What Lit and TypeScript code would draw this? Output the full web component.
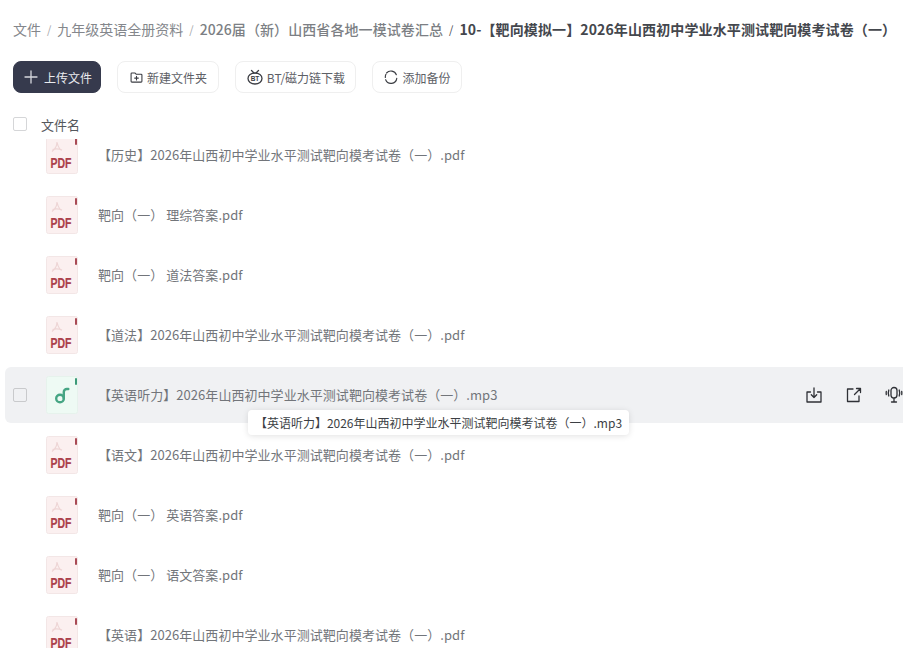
import { LitElement, html, css, svg } from "lit";
import { customElement } from "lit/decorators.js";

const FILES = [
  "【历史】2026年山西初中学业水平测试靶向模考试卷（一）.pdf",
  "靶向（一） 理综答案.pdf",
  "靶向（一） 道法答案.pdf",
  "【道法】2026年山西初中学业水平测试靶向模考试卷（一）.pdf",
  "【英语听力】2026年山西初中学业水平测试靶向模考试卷（一）.mp3",
  "【语文】2026年山西初中学业水平测试靶向模考试卷（一）.pdf",
  "靶向（一） 英语答案.pdf",
  "靶向（一） 语文答案.pdf",
  "【英语】2026年山西初中学业水平测试靶向模考试卷（一）.pdf",
];

const pdfIcon = html`<svg class="ficon" width="32" height="38" viewBox="0 0 32 38">
  <path d="M2.500 .5H29.500a2 2 0 0 1 2 2V35.500a2 2 0 0 1-2 2H2.500a2 2 0 0 1-2-2V2.500a2 2 0 0 1 2-2Z" fill="#fbf0f0" stroke="#f3e6e6"/>
  <rect x="29" y="2" width="2" height="7" rx="1" fill="#a84a55"/>
  <path d="M11 6c.8 4 1.800 6.500 4.500 8.500M11 6c0 4-2.500 7.500-5 9.500M6.500 13.500c3-1 6-1 9.500.5" fill="none" stroke="#eed5d5" stroke-width="1.200"/>
  <text x="15" y="32" text-anchor="middle" class="pdf" textLength="21" lengthAdjust="spacingAndGlyphs">PDF</text>
</svg>`;

const audioIcon = html`<svg class="ficon" width="32" height="38" viewBox="0 0 32 38">
  <path d="M2.500 .5H29.500a2 2 0 0 1 2 2V35.500a2 2 0 0 1-2 2H2.500a2 2 0 0 1-2-2V2.500a2 2 0 0 1 2-2Z" fill="#eefaf4" stroke="#e6f2ec"/>
  <rect x="29" y="2" width="2" height="7" rx="1" fill="#3c9a78"/>
  <circle cx="14" cy="22.500" r="3.800" fill="none" stroke="#46a584" stroke-width="2.400"/>
  <path d="M17.800 22.500V16a3 3 0 0 1 3-3h1.500" fill="none" stroke="#46a584" stroke-width="2.400" stroke-linecap="round"/>
</svg>`;

const ic = (body: unknown, size = 18) => html`<svg width=${size} height=${size} viewBox="0 0 18 18" fill="none" stroke="currentColor" stroke-width="1.300" stroke-linecap="round" stroke-linejoin="round">${body}</svg>`;

@customElement("app-root")
export class AppRoot extends LitElement {
  static styles = css`
    :host {
      display: flex;
      flex-direction: column;
      position: relative;
      width: 903px;
      height: 648px;
      overflow: hidden;
      background: #fff;
      font-family: "Noto Sans CJK SC", "Noto Sans", sans-serif;
      color: #666a70;
      text-spacing-trim: space-all;
    }
    .crumbs {
      display: flex;
      align-items: center;
      height: 20px;
      margin: 19px 0 0 13px;
      font-size: 14px;
      white-space: nowrap;
      color: #84878c;
    }
    .sep { margin: 0 6px; font-size: 11px; color: #a3a5a9; }
    .b1 { font-weight: 500; color: #7c7f84; letter-spacing: 0.08px; }
    .sep.dark { color: #44464c; }
    .cur { font-weight: 700; color: #44474d; letter-spacing: 0.12px; }
    .bar {
      display: flex;
      gap: 16px;
      margin: 22px 0 0 13px;
      height: 32px;
    }
    .btn {
      display: flex;
      align-items: center;
      justify-content: center;
      gap: 3px;
      box-sizing: border-box;
      height: 32px;
      border: 1px solid #efefef;
      border-radius: 8px;
      font-size: 12px;
      color: #5d6066;
      background: #fff;
      white-space: nowrap;
    }
    .btn svg { color: #3b3d43; }
    .primary {
      width: 88px;
      background: #363a4d;
      border-color: #363a4d;
      color: #e9eaee;
      gap: 4px;
    }
    .primary svg { color: #d6d7dd; }
    .new { width: 102px; }
    .bt { width: 121px; }
    .bak { width: 90px; }
    .head {
      display: flex;
      align-items: center;
      height: 24px;
      margin: 19px 0 0 13px;
      font-size: 13px;
      color: #54575c;
      gap: 14px;
    }
    .check {
      box-sizing: border-box;
      width: 14px;
      height: 14px;
      border: 1px solid #d5d6d8;
      border-radius: 2px;
      background: #fff;
      flex: none;
    }
    .list {
      flex: 1;
      min-height: 0;
      overflow: hidden;
      margin-top: 3px;
    }
    .rows { margin-top: -14px; }
    .row {
      display: flex;
      align-items: center;
      height: 60px;
      padding-left: 46px;
      font-size: 13px;
      white-space: nowrap;
      color: #72757a;
    }
    .ficon { flex: none; }
    .name { margin-left: 20px; padding-bottom: 2px; letter-spacing: 0.05px; }
    .pdf { font: 700 14px "Liberation Sans", sans-serif; fill: #ab404a; stroke: #ab404a; stroke-width: 0.2px; }
    .hot {
      position: relative;
      height: 56px;
      margin: 2px 0 2px 5px;
      padding-left: 41px;
      background: #f0f1f3;
      border-radius: 6px 0 0 6px;
    }
    .hot .check {
      position: absolute;
      left: 8px;
      top: 21px;
      background: #f0f1f3;
      border-color: #c9cacc;
    }
    .acts {
      display: flex;
      gap: 22px;
      margin-left: auto;
      color: #2f3136;
    }
    .acts svg { display: block; }
    .tip {
      position: absolute;
      left: 248px;
      top: 410px;
      width: 381px;
      height: 25px;
      box-sizing: border-box;
      display: flex;
      align-items: center;
      justify-content: center;
      background: #fff;
      border-radius: 4px;
      box-shadow: 0 1px 6px rgba(0, 0, 0, 0.12);
      font-size: 12px;
      color: #3c3f44;
      white-space: nowrap;
    }
  `;

  render() {
    return html`
      <div class="crumbs">
        <span>文件</span><span class="sep">/</span>
        <span>九年级英语全册资料</span><span class="sep">/</span>
        <span class="b1">2026届（新）山西省各地一模试卷汇总</span><span class="sep dark">/</span>
        <span class="cur">10-【靶向模拟一】2026年山西初中学业水平测试靶向模考试卷（一）</span>
      </div>
      <div class="bar">
        <div class="btn primary">${ic(svg`<path d="M9 3v12M3 9h12"/>`, 18)}<span>上传文件</span></div>
        <div class="btn new">${ic(svg`<path d="M2.500 4.500a1 1 0 0 1 1-1h3.500l1.500 1.500h6a1 1 0 0 1 1 1v7.500a1 1 0 0 1-1 1h-11a1 1 0 0 1-1-1ZM9 7.500v4.500M6.800 9.700h4.400"/>`, 15)}<span>新建文件夹</span></div>
        <div class="btn bt">${ic(svg`<ellipse cx="9" cy="10.500" rx="7" ry="5.500"/><path d="M5.500 2.500 8 5M12.500 2.500 10 5"/><text x="9" y="13" text-anchor="middle" font-size="6.500" font-weight="700" fill="currentColor" stroke="none" font-family="Liberation Sans">BT</text>`, 18)}<span>BT/磁力链下载</span></div>
        <div class="btn bak">${ic(svg`<path d="M4 4.500A6.500 6.500 0 0 1 15 6.500M15.500 10.500A6.500 6.500 0 0 1 3 12M2.600 9.500A6.500 6.500 0 0 1 3.300 6"/>`, 16)}<span>添加备份</span></div>
      </div>
      <div class="head"><span class="check"></span><span>文件名</span></div>
      <div class="list">
        <div class="rows">
          ${FILES.map((f, i) =>
            i === 4
              ? html`<div class="row hot">
                  <span class="check"></span>${audioIcon}<span class="name">${f}</span>
                  <div class="acts">
                    ${ic(svg`<path d="M5.500 6H2v10h14V6h-3.500M9 2v9.500M6.300 8.800 9 11.500l2.700-2.700"/>`, 18)}
                    ${ic(svg`<path d="M8 3H2.500v12.500H14V10M9.500 8.500 15 3M11.500 2.500H15.500V6.500"/>`, 18)}
                    ${ic(svg`<rect x="6" y="1.500" width="6" height="10.500" rx="3"/><path d="M9 12.500v3.500M6.500 16h5M3.800 4a9 9 0 0 0 0 6M14.200 4a9 9 0 0 1 0 6M1.300 5.500a7 7 0 0 0 0 3M16.700 5.500a7 7 0 0 1 0 3"/>`, 18)}
                  </div>
                </div>`
              : html`<div class="row">${pdfIcon}<span class="name">${f}</span></div>`
          )}
        </div>
      </div>
      <div class="tip">【英语听力】2026年山西初中学业水平测试靶向模考试卷（一）.mp3</div>
    `;
  }
}
